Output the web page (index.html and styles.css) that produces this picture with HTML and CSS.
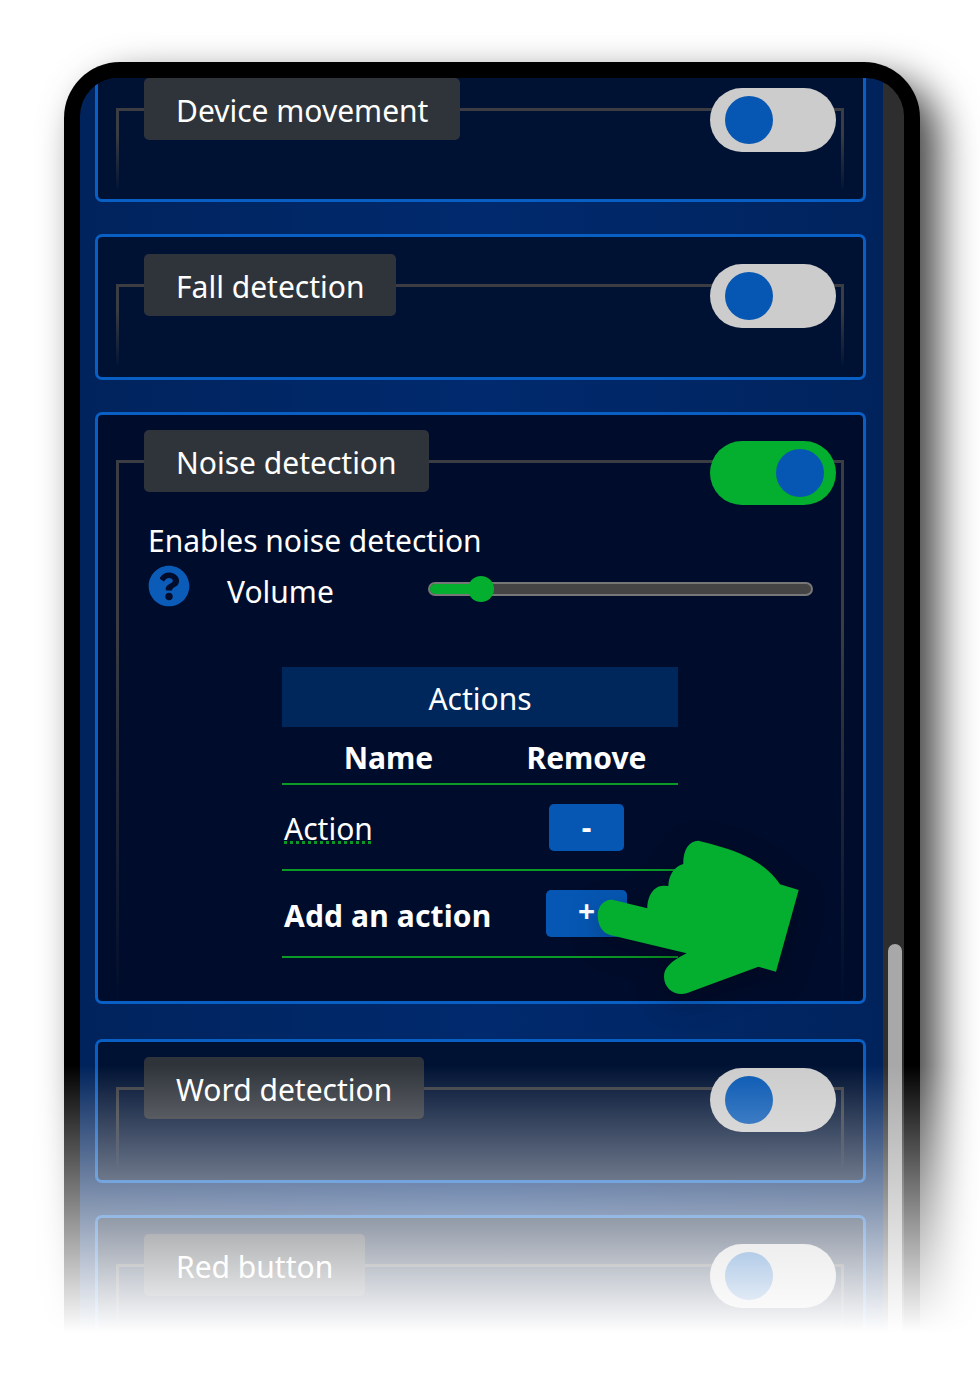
FILE: index.html
```html
<!DOCTYPE html>
<html lang="en">
<head>
    <meta charset="UTF-8">
    <title>Detection settings</title>
    <link rel="stylesheet" href="styles.css">
</head>
<body>

    <div class="page">
        <div class="phone">
            <div class="screen">
                <div class="panel">
                    <div class="list">

                        <section class="card card-top">
                            <fieldset class="frame">
                                <legend>Device movement</legend>
                            </fieldset>
                            <div class="toggle"><span class="knob"></span></div>
                        </section>

                        <section class="card card-mid">
                            <fieldset class="frame">
                                <legend>Fall detection</legend>
                            </fieldset>
                            <div class="toggle"><span class="knob"></span></div>
                        </section>

                        <section class="card card-open">
                            <fieldset class="frame">
                                <legend>Noise detection</legend>
                                <p class="hint">Enables noise detection</p>
                                <div class="volume">
                                    <svg class="help" viewBox="0 0 512 512">
                                        <path d="M504 256c0 136.997-111.043 248-248 248S8 392.997 8 256C8 119.083 119.043 8 256 8s248 111.083 248 248zM262.655 90c-54.497 0-89.255 22.957-116.549 63.758-3.536 5.286-2.353 12.415 2.715 16.258l34.699 26.31c5.205 3.947 12.621 3.008 16.665-2.122 17.864-22.658 30.113-35.797 57.303-35.797 20.429 0 45.698 13.148 45.698 32.958 0 14.976-12.363 22.667-32.534 33.976C247.128 238.528 216 254.941 216 296v4c0 6.627 5.373 12 12 12h56c6.627 0 12-5.373 12-12v-1.333c0-28.462 83.186-29.647 83.186-106.667 0-58.002-60.165-102-116.531-102zM256 338c-25.365 0-46 20.635-46 46 0 25.364 20.635 46 46 46s46-20.636 46-46c0-25.365-20.635-46-46-46z"></path>
                                    </svg>
                                    <span class="volume-label">Volume</span>
                                    <div class="slider">
                                        <div class="slider-fill" style="width:13.5%"><span class="slider-thumb"></span></div>
                                    </div>
                                </div>

                                <table class="actions">
                                    <thead>
                                        <tr><th colspan="2" class="actions-title">Actions</th></tr>
                                        <tr class="actions-head"><th class="col-name">Name</th><th>Remove</th></tr>
                                    </thead>
                                    <tbody>
                                        <tr class="action-row">
                                            <td><span class="misspelt">Action</span></td>
                                            <td class="col-remove"><button class="btn">-</button></td>
                                        </tr>
                                        <tr>
                                            <td class="add-label">Add an action</td>
                                            <td class="col-remove"><button class="btn btn-add">+</button></td>
                                        </tr>
                                    </tbody>
                                </table>
                            </fieldset>
                            <div class="toggle"><span class="knob"></span></div>
                            <svg class="hand" viewBox="0 0 870 600">
                                <path d="M250 240 L352 265 C352 230 370 197 400 197 C408 197 415 198 415 198 C415 170 430 140 460 132 C458 95 475 62 505 62 C600 85 700 115 750 193 L806 210 L738 455 L685 440 L470 520 C435 530 402 505 402 470 C402 445 420 425 470 400 L240 345 C215 338 203 312 203 285 C203 258 225 235 250 240 Z"></path>
                            </svg>
                        </section>

                        <section class="card card-low">
                            <fieldset class="frame">
                                <legend>Word detection</legend>
                            </fieldset>
                            <div class="toggle"><span class="knob"></span></div>
                        </section>

                        <section class="card">
                            <fieldset class="frame">
                                <legend>Red button</legend>
                            </fieldset>
                            <div class="toggle"><span class="knob"></span></div>
                        </section>

                    </div>
                </div>
                <div class="scrollbar"><div class="scrollbar-thumb"></div></div>
            </div>
        </div>
        <div class="fade"></div>
    </div>

</body>
</html>
```

FILE: styles.css
```css
body{
    margin: 0;
    background: #fff;
    font-family: "Noto Sans", "Open Sans", sans-serif;
    color: #fff;
}

.page{
    position: relative;
    height: 1400px;
    overflow: hidden;
    padding: 62px 0 0 64px;
    box-sizing: border-box;
}

.phone{
    width: 856px;
    height: 1300px;
    box-sizing: border-box;
    padding: 16px;
    background: #000;
    border-radius: 56px 56px 0 0;
    box-shadow: 18px 18px 40px rgba(0,0,0,.75);
}

.screen{
    display: flex;
    height: 100%;
    overflow: hidden;
    border-radius: 38px 38px 0 0;
}

.panel{
    flex: 1;
    padding: 0 17px 0 15px;
    background: linear-gradient(90deg, #00235c 0, #002a6e 50%, #00235c 100%);
}

.list{
    display: flex;
    flex-direction: column;
    gap: 32px;
    margin-top: -22px;
}

.scrollbar{
    width: 21px;
    box-sizing: border-box;
    padding: 866px 2px 0 5px;
    background: #2e2e2e;
}

.scrollbar-thumb{
    height: 420px;
    background: #a8a8a8;
    border-radius: 7px 7px 0 0;
}

/* cards */

.card{
    --pad: 16px;
    --toggle-top: 26px;
    position: relative;
    min-height: 146px;
    box-sizing: border-box;
    padding: var(--pad) 19px 0 18px;
    background: #001233;
    border: 3px solid #0a5fc4;
    border-radius: 7px;
}

.card-top{ --pad: 19px; --toggle-top: 29px; }
.card-mid{ --pad: 17px; --toggle-top: 27px; }
.card-open{ --pad: 15px; background: #000c2b; margin-bottom: 3px; }
.card-low{ --pad: 15px; min-height: 144px; }

.frame{
    min-height: 108px;
    margin: 0;
    padding: 0 28px 0 29px;
    border: 3px solid;
    border-bottom: 0;
    border-image: linear-gradient(#3b3d42 0, #3b3d42 30%, transparent 100%) 3;
}

.frame legend{
    margin-left: -4px;
    padding: 0 32px;
    height: 62px;
    line-height: 66px;
    font-size: 30px;
    background: #2f343b;
    border-radius: 5px;
}

.toggle{
    position: absolute;
    top: var(--toggle-top);
    right: 27px;
    width: 126px;
    height: 64px;
    background: #ccc;
    border-radius: 32px;
}

.knob{
    position: absolute;
    top: 8px;
    left: 15px;
    width: 48px;
    height: 48px;
    background: #0657b3;
    border-radius: 50%;
}

.card-open .toggle{
    background: #04ae2f;
}

.card-open .knob{
    left: 66px;
}

/* noise card content */

.hint{
    margin: 27px 0 0;
    font-size: 30px;
    line-height: 44px;
}

.volume{
    display: flex;
    align-items: center;
    height: 40px;
    margin-top: 6px;
    font-size: 30px;
}

.help{
    width: 42px;
    height: 42px;
    margin-bottom: 6px;
    fill: #0a5cb8;
}

.volume-label{
    width: 201px;
    margin-left: 37px;
    padding-top: 4px;
}

.slider{
    flex: 1;
    height: 10px;
    background: #444;
    border: 2px solid #777;
    border-radius: 7px;
}

.slider-fill{
    position: relative;
    height: 100%;
    background: #04ae2f;
    border-radius: 7px 0 0 7px;
}

.slider-thumb{
    position: absolute;
    top: -8px;
    right: -13px;
    width: 26px;
    height: 26px;
    background: #04ae2f;
    border-radius: 50%;
}

.actions{
    width: 396px;
    margin: 58px 0 43px 134px;
    border-collapse: collapse;
    font-size: 30px;
}

.actions-title{
    height: 60px;
    padding: 2px 0 0;
    box-sizing: border-box;
    font-weight: 400;
    background: #00275c;
}

.actions-head th{
    height: 57px;
    padding: 4px 0 0;
    box-sizing: border-box;
    font-weight: 700;
    border-bottom: 2px solid #0a9a25;
}

.actions td{
    height: 87px;
    padding: 3px 0 0 2px;
    box-sizing: border-box;
    border-bottom: 2px solid #0a9a25;
}

.actions .action-row td{ height: 86px; }

.col-name{ width: 213px; }
.actions .col-remove{ padding: 0; text-align: center; }

.misspelt{
    text-decoration: underline dotted #0a9a25;
    text-underline-offset: 1px;
}

.add-label{ font-weight: 700; letter-spacing: .15px; }

.btn{
    display: block;
    width: 75px;
    height: 47px;
    margin: 0 auto;
    padding: 0 0 2px;
    font-family: inherit;
    font-size: 30px;
    font-weight: 700;
    color: #fff;
    background: #0657b3;
    border: 0;
    border-radius: 5px;
}

.btn-add{
    width: 81px;
    padding-bottom: 7px;
}

.hand{
    position: absolute;
    left: 432px;
    top: 405px;
    width: 290px;
    height: 200px;
    fill: #04ae2f;
    filter: drop-shadow(0 8px 14px rgba(0,0,0,.25));
}

.fade{
    position: absolute;
    left: 0;
    right: 0;
    top: 1065px;
    bottom: 0;
    background: linear-gradient(rgba(255,255,255,0) 0, #fff 268px);
}
```
